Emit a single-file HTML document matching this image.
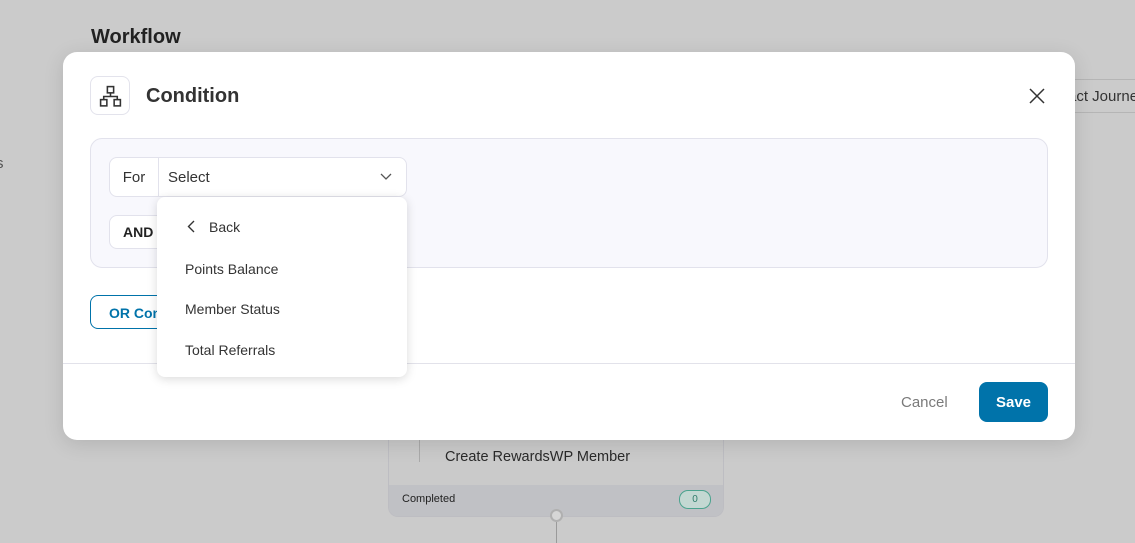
<!DOCTYPE html>
<html><head><style>
*{box-sizing:border-box;margin:0;padding:0}
body{width:1135px;height:543px;background:#cbcbcb;font-family:"Liberation Sans",sans-serif;position:relative;overflow:hidden;color:#2a2a2a}
.abs{position:absolute;white-space:nowrap}
</style></head><body>
<div class="abs" style="left:91px;top:26px;font-size:20px;font-weight:bold;color:#222">Workflow</div>
<div class="abs" style="left:-4px;top:155px;font-size:15px;color:#555">s</div>
<div class="abs" style="left:1060px;top:79px;width:90px;height:34px;border-top:1px solid #b5b5b5;border-bottom:1px solid #b5b5b5;font-size:15px;color:#333;padding:8px 0 0 8px">act Journey</div>
<!-- card behind -->
<div class="abs" style="left:388px;top:420px;width:336px;height:97px;border:1px solid #bdbdc2;border-top:none;border-radius:0 0 10px 10px;background:#cacaca;overflow:hidden">
 <div class="abs" style="left:30px;top:0;width:1px;height:42px;background:#aaa"></div>
 <div class="abs" style="left:56px;top:29px;font-size:14.5px;color:#2a2a2a">Create RewardsWP Member</div>
 <div class="abs" style="left:0;top:65px;width:336px;height:32px;background:#c0c1c5"></div>
 <div class="abs" style="left:13px;top:73px;font-size:11px;color:#222">Completed</div>
 <div class="abs" style="left:290px;top:70px;width:32px;height:19px;border:1px solid #4aa38e;border-radius:9px;background:#c3d8d2;font-size:10px;text-align:center;line-height:17px;color:#2f7d6b">0</div>
</div>
<div class="abs" style="left:550px;top:509px;width:13px;height:13px;border:2px solid #b0b0b0;border-radius:50%;background:#d6d6d6"></div>
<div class="abs" style="left:556px;top:522px;width:1px;height:21px;background:#9a9a9a"></div>
<!-- modal -->
<div class="abs" style="left:63px;top:52px;width:1012px;height:388px;background:#fff;border-radius:14px;box-shadow:0 4px 20px rgba(0,0,0,.12)">
 <div class="abs" style="left:27px;top:24px;width:40px;height:39px;border:1px solid #e3e3ec;border-radius:8px">
  <svg class="abs" style="left:7px;top:7px" width="25" height="25" viewBox="0 0 24 24" fill="none" stroke="#333" stroke-width="1.5"><rect x="9" y="2.5" width="6" height="6"/><rect x="2.5" y="15" width="6" height="6"/><rect x="15.5" y="15" width="6" height="6"/><path d="M12 8.5v3.5M5.5 15v-3h13v3"/></svg>
 </div>
 <div class="abs" style="left:83px;top:33px;font-size:20px;font-weight:bold;color:#333">Condition</div>
 <svg class="abs" style="left:965px;top:35px" width="18" height="18" viewBox="0 0 18 18" stroke="#333" stroke-width="1.5"><path d="M2 2L16 16M16 2L2 16"/></svg>
 <div class="abs" style="left:27px;top:86px;width:958px;height:130px;background:#f8f8fd;border:1px solid #e2e2ec;border-radius:12px"></div>
 <div class="abs" style="left:46px;top:105px;width:298px;height:40px;background:#fff;border:1px solid #e2e2ec;border-radius:8px">
  <div class="abs" style="left:0;top:0;width:49px;height:38px;border-right:1px solid #e2e2ec;font-size:15px;line-height:40px;text-align:center;color:#333">For</div>
  <div class="abs" style="left:58px;top:0;font-size:15px;line-height:40px;color:#333">Select</div>
  <svg class="abs" style="left:270px;top:15px" width="12" height="8" viewBox="0 0 12 8" fill="none" stroke="#555" stroke-width="1.3"><path d="M1 1l5 5 5-5"/></svg>
 </div>
 <div class="abs" style="left:46px;top:163px;width:110px;height:34px;background:#fff;border:1px solid #e2e2ec;border-radius:8px;font-size:14px;font-weight:bold;line-height:32px;padding-left:13px;color:#222">AND Condition</div>
 <div class="abs" style="left:27px;top:243px;width:130px;height:34px;border:1px solid #0073aa;border-radius:8px;font-size:14px;font-weight:bold;line-height:34px;padding-left:18px;color:#0073aa">OR Condition</div>
 <div class="abs" style="left:0;top:311px;width:1012px;height:1px;background:#e2e2ea"></div>
 <div class="abs" style="left:838px;top:342px;font-size:15px;color:#7a7a7a">Cancel</div>
 <div class="abs" style="left:916px;top:330px;width:69px;height:40px;background:#0073aa;border-radius:8px;color:#fff;font-size:15px;font-weight:bold;text-align:center;line-height:41px">Save</div>
</div>
<!-- dropdown -->
<div class="abs" style="left:157px;top:197px;width:250px;height:180px;background:#fff;border-radius:8px;box-shadow:0 2px 10px rgba(0,0,0,.15);font-size:14px;color:#333">
 <svg class="abs" style="left:30px;top:23px" width="8" height="13" viewBox="0 0 8 13" fill="none" stroke="#333" stroke-width="1.4"><path d="M7 1L1.5 6.5 7 12"/></svg>
 <div class="abs" style="left:52px;top:22px">Back</div>
 <div class="abs" style="left:28px;top:64px">Points Balance</div>
 <div class="abs" style="left:28px;top:104px">Member Status</div>
 <div class="abs" style="left:28px;top:145px">Total Referrals</div>
</div>
</body></html>
